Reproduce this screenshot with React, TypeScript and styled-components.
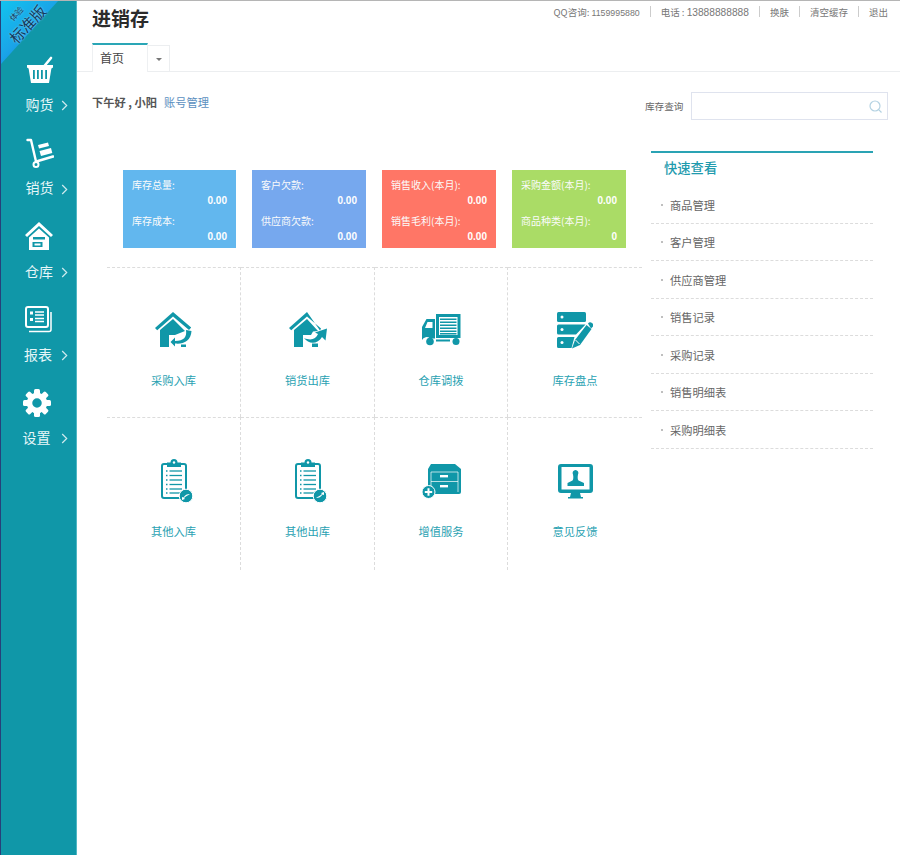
import React from "react";
import styled, { createGlobalStyle } from "styled-components";

const teal = "#1097a8";
const FONT = '"Noto Sans CJK SC", "Liberation Sans", sans-serif';

const Global = createGlobalStyle`
  html, body { margin: 0; padding: 0; background: #fff; }
  body { font-family: ${FONT}; font-size: 12px; color: #555; }
  * { box-sizing: border-box; }
`;

const Page = styled.div`
  display: flex;
  width: 900px;
  min-height: 855px;
  border-top: 1px solid #b5b5b5;
  position: relative;
`;

const Sidebar = styled.nav`
  width: 77px;
  flex: none;
  background: ${teal};
  border-left: 1px solid #27407a;
  border-right: 1px solid #4fb7c4;
  padding-top: 52px;
  position: relative;
`;

const Ribbon = styled.div`
  position: absolute;
  left: 0;
  top: 0;
  width: 57px;
  height: 63px;
  background: linear-gradient(135deg, #12c3ee 0%, #1aa6e8 45%, #1687e6 75%);
  clip-path: polygon(0 0, 100% 0, 0 100%);
`;

const RibbonText = styled.div`
  position: absolute;
  left: -1px;
  top: 6px;
  width: 46px;
  transform: rotate(-47deg);
  text-align: center;
  color: #123a5c;
  line-height: 1;
  text-shadow: 0 0 2px rgba(255, 255, 255, 0.55);
`;

const RibbonSmall = styled.div`
  font-size: 8px;
  margin-bottom: 3px;
`;

const RibbonBig = styled.div`
  font-size: 15px;
  white-space: nowrap;
`;

const NavItem = styled.a<{ $left: number; $right: number }>`
  display: block;
  height: 83.3px;
  color: #fff;
  position: relative;
  text-align: center;
  padding: 0 ${(p) => p.$right}px 0 ${(p) => p.$left}px;
`;

const NavIcon = styled.div`
  height: 34px;
  display: flex;
  align-items: center;
  justify-content: center;
  svg { display: block; }
`;

const NavLabel = styled.div`
  height: 20px;
  line-height: 20px;
  margin-top: 7px;
  font-size: 14px;
  color: #e6f6f8;
`;

const NavArrow = styled.span`
  position: absolute;
  left: 60px;
  bottom: 25px;
  svg { display: block; }
`;

const Main = styled.main`
  flex: 1;
  min-width: 0;
`;

const Header = styled.header`
  height: 71px;
  border-bottom: 1px solid #eceef0;
  padding: 0 12px 0 15px;
  display: flex;
  flex-direction: column;
`;

const TopRow = styled.div`
  display: flex;
  justify-content: space-between;
  height: 42px;
`;

const Title = styled.h1`
  margin: 0;
  font-size: 19px;
  line-height: 34px;
  font-weight: 700;
  color: #2b2b2b;
`;

const TopLinks = styled.div`
  display: flex;
  align-items: center;
  height: 22px;
  font-size: 9.5px;
  color: #777;
  white-space: nowrap;
`;

const TopLink = styled.span`
  & + &::before {
    content: "";
    display: inline-block;
    width: 1px;
    height: 11px;
    background: #ccc;
    margin: 0 10px;
    vertical-align: -1px;
  }
`;

const Digits = styled.span<{ $size: number }>`
  font-family: "Liberation Sans", sans-serif;
  font-size: ${(p) => p.$size}px;
`;

const Tabs = styled.div`
  display: flex;
  align-items: flex-end;
  height: 28px;
`;

const ActiveTab = styled.div`
  width: 56px;
  height: 29px;
  margin-bottom: -1px;
  background: #fff;
  border-top: 2px solid #2aa6b6;
  border-left: 1px solid #eef0f2;
  border-right: 1px solid #eef0f2;
  padding-left: 7px;
  line-height: 26px;
  font-size: 12px;
  color: #444;
`;

const TabMenu = styled.div`
  width: 22px;
  height: 26px;
  border: 1px solid #eceef0;
  border-bottom: 0;
  border-left: 0;
  display: flex;
  align-items: center;
  justify-content: center;
  &::after {
    content: "";
    margin-top: 2px;
    border-left: 3px solid transparent;
    border-right: 3px solid transparent;
    border-top: 3px solid #777;
  }
`;

const Body = styled.div`
  display: flex;
`;

const LeftCol = styled.section`
  width: 565px;
  flex: none;
  padding-top: 20px;
`;

const Greeting = styled.div`
  height: 20px;
  line-height: 20px;
  padding-left: 15px;
  font-size: 11.25px;
  font-weight: 700;
  color: #555;
  display: flex;
  gap: 7px;
`;

const AccountLink = styled.a`
  font-weight: 400;
  color: #5b8fc0;
`;

const Stats = styled.div`
  margin: 58px 0 19px 46px;
  display: grid;
  grid-template-columns: 113px 114px 114px 114px;
  column-gap: 16px;
`;

const StatCard = styled.div<{ $bg: string }>`
  height: 78px;
  background: ${(p) => p.$bg};
  padding: 7px 9px 0;
  color: #fff;
  font-size: 10px;
`;

const StatLabel = styled.div`
  height: 16px;
  line-height: 16px;
  color: #fbfbfb;
  white-space: nowrap;
`;

const StatValue = styled.div`
  height: 20px;
  line-height: 16px;
  text-align: right;
  font-family: "Liberation Sans", sans-serif;
  font-weight: 700;
  font-size: 10px;
`;

const Tiles = styled.div`
  margin-left: 30px;
  display: grid;
  grid-template-columns: 134px 134px 133px 134px;
`;

const Tile = styled.a<{ $last: boolean; $height: number }>`
  height: ${(p) => p.$height}px;
  border-top: 1px dashed #dcdcdc;
  border-right: ${(p) => (p.$last ? "0" : "1px dashed #dcdcdc")};
  display: flex;
  flex-direction: column;
  align-items: center;
  color: ${teal};
`;

const TileIcon = styled.div<{ $top: number }>`
  height: 50px;
  margin-top: ${(p) => p.$top}px;
  display: flex;
  align-items: center;
  justify-content: center;
  svg { display: block; }
`;

const TileLabel = styled.div`
  margin-top: 16px;
  line-height: 18px;
  font-size: 11.25px;
  color: #2aa2b2;
`;

const RightCol = styled.aside`
  flex: 1;
  padding: 20px 12px 0 3px;
`;

const SearchRow = styled.div`
  display: flex;
  align-items: center;
  justify-content: space-between;
  height: 28px;
  font-size: 9.6px;
  color: #666;
`;

const SearchBox = styled.div`
  width: 197px;
  height: 28px;
  border: 1px solid #dfe3ee;
  display: flex;
  align-items: center;
  justify-content: flex-end;
  padding-right: 4px;
`;

const Quick = styled.div`
  margin: 31px 0 0 6px;
  width: 222px;
  border-top: 2px solid #2aa3b4;
`;

const QuickTitle = styled.h2`
  margin: 0;
  height: 33px;
  line-height: 30px;
  padding-left: 13px;
  font-size: 13.3px;
  font-weight: 500;
  color: #1f9bae;
`;

const QuickItem = styled.a`
  display: flex;
  align-items: center;
  height: 37.5px;
  padding: 1px 0 0 10px;
  border-bottom: 1px dashed #dcdcdc;
  font-size: 11.25px;
  color: #666;
  &::before {
    content: "";
    width: 2px;
    height: 2px;
    margin-right: 7px;
    background: #aaa;
    border-radius: 50%;
  }
`;

const Basket = () => (
  <svg width="28" height="28" viewBox="0 0 28 28" fill="#fff">
    <path d="M17.5 11 L25 2" stroke="#fff" strokeWidth="2.6" strokeLinecap="round" />
    <path fillRule="evenodd" d="M1 9 h26 v2.4 l-1.6 1 L23 27 H5 L2.6 12.400 L1 11.400z M7 14 v9 h1.800 v-9z M11 14 v9 h1.800 v-9z M15 14 v9 h1.800 v-9z M19.200 14 v9 H21 v-9z" />
  </svg>
);

const Truck = () => (
  <svg width="28" height="30" viewBox="0 0 28 30" fill="none">
    <path d="M1.500 2 H5 L10 23.500" stroke="#fff" strokeWidth="2.400" strokeLinecap="round" strokeLinejoin="round" />
    <path d="M12 23 L27 18.500" stroke="#fff" strokeWidth="2.600" strokeLinecap="round" />
    <circle cx="10" cy="26.500" r="2.500" stroke="#fff" strokeWidth="2" />
    <path d="M12 7 L22 4.500 L23 8 L13 10.500z M13.500 13 L25 10 L26.300 15 L15 18z" fill="#fff" />
  </svg>
);

const HouseNav = () => (
  <svg width="28" height="29" viewBox="0 0 28 29" fill="#fff">
    <path d="M14 0 L0 13 l2 2 L14 4 l12 11 l2 -2z" />
    <path fillRule="evenodd" d="M14 6.500 L4 15.500 V28 H24 V15.500z M8 15 H20 V17.500 H8z M7.500 20 H17.500 V25 H7.500z" />
    <path d="M9.500 21.500 h6 v2 h-6z" />
  </svg>
);

const Report = () => (
  <svg width="27" height="27" viewBox="0 0 27 27" fill="none">
    <rect x="1" y="1" width="22" height="20" rx="2" stroke="#fff" strokeWidth="2" />
    <path d="M26 6 V23.500 A2 2 0 0 1 24 25.500 H4" stroke="#fff" strokeWidth="1.500" />
    <path d="M5 5.500 h3 v3 h-3z M5 12 h3 v3 h-3z" fill="#fff" />
    <path d="M10 6 h9 M10 9 h9 M10 12.500 h9 M10 15.500 h9" stroke="#fff" strokeWidth="1.300" />
  </svg>
);

const Gear = () => {
  const teeth = Array.from({ length: 8 }, (_, i) => i * 45);
  return (
    <svg width="28" height="30" viewBox="0 0 28 28" fill="#fff">
      {teeth.map((a) => (
        <rect key={a} x="11" y="0" width="6" height="8" rx="1.500" transform={`rotate(${a} 14 14)`} />
      ))}
      <circle cx="14" cy="14" r="7.500" fill="none" stroke="#fff" strokeWidth="5.500" />
    </svg>
  );
};

const Chevron = () => (
  <svg width="7" height="11" viewBox="0 0 7 11" fill="none">
    <path d="M1.200 1 L5.700 5.500 L1.200 10" stroke="#cfeaee" strokeWidth="1.200" />
  </svg>
);

const HouseIn = () => (
  <svg width="38" height="36" viewBox="0 0 38 36" fill={teal}>
    <path d="M18 0 L0 16 l2.200 2.200 L18 4.500 l16 13.500 l2.200 -2.400z" />
    <path fillRule="evenodd" d="M18 7 L5 18 V35 H14 V23 H20 L30 19z" />
    <path d="M31 18 C32 25 29 29 20 29 V25.500 L15.500 30 L20 34.500 V31.500 C28 32.500 36 29 36.500 19z" />
    <path d="M26 32.500 H31 V35 H26z" />
  </svg>
);

const HouseOut = () => (
  <svg width="38" height="36" viewBox="0 0 38 36" fill={teal}>
    <path d="M18 0 L0 16 l2.200 2.200 L18 4.500 l14 12 l-1 2z" />
    <path fillRule="evenodd" d="M18 7 L5 18 V35 H14 V23 H22 L24 19.500 L29 19z" />
    <path d="M15 26 C22 29 27 27 29 22 L26 20.500 L38 16.500 L36.500 28.500 L33 25 C29 32 20 33 15 26z" />
    <path d="M23 31.500 H29 V35 H23z" />
  </svg>
);

const TruckTile = () => (
  <svg width="39" height="32" viewBox="0 0 39 32" fill={teal}>
    <path fillRule="evenodd" d="M14 0 H38.500 V24 H14z M17 3 V21 H35.500 V3z" />
    <path d="M18 4.500 H34.500 V6 H18z M18 7.500 H34.500 V9 H18z M18 10.500 H34.500 V12 H18z M18 13.500 H34.500 V15 H18z M18 16.500 H34.500 V18 H18z M18 19 H34.500 V20.500 H18z" />
    <path fillRule="evenodd" d="M4.500 5 H13 V24.500 H8 A5 5 0 0 0 0 26 V13z M5.500 8 L3 14 H10.500 V8z" />
    <circle cx="8" cy="27.500" r="3.800" />
    <circle cx="34" cy="27.500" r="3.500" />
    <path d="M14 25.500 H28 V27.500 H14z" />
  </svg>
);

const ServerEdit = () => (
  <svg width="36" height="37" viewBox="0 0 36 37" fill={teal}>
    <rect x="0" y="0" width="29" height="10" rx="1.500" />
    <path d="M1.500 12.500 H28.500 L19 22.500 H1.500 A1.500 1.500 0 0 1 0 21 V14 A1.500 1.500 0 0 1 1.500 12.500z" />
    <path d="M1.500 25 H17.500 L14.500 36 H1.500 A1.500 1.500 0 0 1 0 34.500 V26.500 A1.500 1.500 0 0 1 1.500 25z" />
    <circle cx="5" cy="5" r="1.500" fill="#fff" />
    <circle cx="5" cy="17.500" r="1.500" fill="#fff" />
    <circle cx="5" cy="30.500" r="1.500" fill="#fff" />
    <path d="M29.500 13 L34.500 17 L23 33 L15 36.500 L18 28z" />
    <path d="M31 11.500 a2.600 2.600 0 0 1 4.500 3.500 L34 16.500z" />
    <path d="M18.500 28 L22.500 32" stroke="#fff" strokeWidth="1" />
  </svg>
);

const Clipboard = ({ out }: { out?: boolean }) => (
  <svg width="38" height="44" viewBox="-6 0 38 44" fill="none">
    <rect x="1" y="5" width="24" height="34" rx="2" stroke={teal} strokeWidth="2" />
    <path d="M6 3.500 H9.500 A3.500 3.500 0 0 1 16.500 3.500 H20 V8 H6z" fill={teal} />
    <circle cx="13" cy="3.500" r="1.200" fill="#fff" />
    {[12, 16.5, 21, 25.5, 30, 34].map((y) => (
      <g key={y}>
        <path d={`M5 ${y} h1.500`} stroke={teal} strokeWidth="1.300" />
        <path d={`M8.500 ${y} h12.500`} stroke={teal} strokeWidth="1.300" />
      </g>
    ))}
    <circle cx="25" cy="37" r="6.800" fill={teal} stroke="#fff" strokeWidth="1" />
    <path d={out ? "M21 39 C24 39 26 38 27.500 35.500 L29 36 L29 33 L26 34 L27 35 C25 37 23 37.500 21 39z" : "M29 35 C26 35 24 36 22.500 38.500 L21 38 L21 41 L24 40 L23 39 C25 37 27 36.500 29 35z"} fill="#fff" />
  </svg>
);

const Cabinet = () => (
  <svg width="39" height="35" viewBox="0 0 39 35" fill={teal}>
    <path fillRule="evenodd" d="M9 0 H33 L39 5 V28 A2 2 0 0 1 37 30 H6 V5z" />
    <path d="M9 8 H36 M9 17.500 H36 M9 8 V28 M36 8 V28" stroke="#fff" strokeWidth="0.700" fill="none" />
    <rect x="18" y="11" width="8" height="2.400" fill="#fff" />
    <rect x="18" y="21" width="8" height="2.400" fill="#fff" />
    <circle cx="6.500" cy="28" r="6.500" stroke="#fff" strokeWidth="1" />
    <path d="M2.800 27 H5.500 V24.300 H7.500 V27 H10.200 V29 H7.500 V31.700 H5.500 V29 H2.800z" fill="#fff" />
  </svg>
);

const Monitor = () => (
  <svg width="35" height="35" viewBox="0 0 35 35" fill={teal}>
    <path fillRule="evenodd" d="M3 0 H32 A3 3 0 0 1 35 3 V26 A3 3 0 0 1 32 29 H3 A3 3 0 0 1 0 26 V3 A3 3 0 0 1 3 0z M3.500 3 V25.500 H31.500 V3z" />
    <path d="M13 29 H22 L23 33 H25 V34.500 H10 V33 H12z" />
    <path d="M17.500 6 A3 3 0 0 1 20 10.500 C19.500 13 19.500 15.500 20.500 16.500 L26 19 V22 H9.500 V19 L14.500 16.500 C15.500 15.500 15.500 13 15 10.500 A3 3 0 0 1 17.500 6z" />
  </svg>
);

const Magnifier = () => (
  <svg width="15" height="15" viewBox="0 0 15 15" fill="none">
    <circle cx="7" cy="7" r="5" stroke="#b4d2e2" strokeWidth="1.200" />
    <path d="M10.700 10.700 L13.500 13.500" stroke="#b4d2e2" strokeWidth="1.200" />
  </svg>
);

const navItems = [
  { label: "购货", icon: <Basket />, left: 2, right: 0 },
  { label: "销货", icon: <Truck />, left: 2, right: 0 },
  { label: "仓库", icon: <HouseNav />, left: 1, right: 0 },
  { label: "报表", icon: <Report />, left: 1, right: 2 },
  { label: "设置", icon: <Gear />, left: 0, right: 4 },
];

const statCards = [
  { bg: "#62b7ee", rows: [["库存总量:", "0.00"], ["库存成本:", "0.00"]] },
  { bg: "#76a8ee", rows: [["客户欠款:", "0.00"], ["供应商欠款:", "0.00"]] },
  { bg: "#ff7666", rows: [["销售收入(本月):", "0.00"], ["销售毛利(本月):", "0.00"]] },
  { bg: "#aadc66", rows: [["采购金额(本月):", "0.00"], ["商品种类(本月):", "0"]] },
];

const tiles = [
  { label: "采购入库", icon: <HouseIn /> },
  { label: "销货出库", icon: <HouseOut /> },
  { label: "仓库调拨", icon: <TruckTile /> },
  { label: "库存盘点", icon: <ServerEdit /> },
  { label: "其他入库", icon: <Clipboard /> },
  { label: "其他出库", icon: <Clipboard out /> },
  { label: "增值服务", icon: <Cabinet /> },
  { label: "意见反馈", icon: <Monitor /> },
];

const quickLinks = ["商品管理", "客户管理", "供应商管理", "销售记录", "采购记录", "销售明细表", "采购明细表"];

export default function App() {
  return (
    <Page>
      <Global />
      <Sidebar>
        <Ribbon />
        <RibbonText>
          <RibbonSmall>体验</RibbonSmall>
          <RibbonBig>标准版</RibbonBig>
        </RibbonText>
        {navItems.map((n) => (
          <NavItem key={n.label} $left={n.left} $right={n.right}>
            <NavIcon>{n.icon}</NavIcon>
            <NavLabel>{n.label}</NavLabel>
            <NavArrow>
              <Chevron />
            </NavArrow>
          </NavItem>
        ))}
      </Sidebar>
      <Main>
        <Header>
          <TopRow>
            <Title>进销存</Title>
            <TopLinks>
              <TopLink>
                QQ咨询: <Digits $size={8.8}>1159995880</Digits>
              </TopLink>
              <TopLink>
                电话 : <Digits $size={10.2}>13888888888</Digits>
              </TopLink>
              <TopLink>换肤</TopLink>
              <TopLink>清空缓存</TopLink>
              <TopLink>退出</TopLink>
            </TopLinks>
          </TopRow>
          <Tabs>
            <ActiveTab>首页</ActiveTab>
            <TabMenu />
          </Tabs>
        </Header>
        <Body>
          <LeftCol>
            <Greeting>
              <span>下午好 , 小阳</span>
              <AccountLink>账号管理</AccountLink>
            </Greeting>
            <Stats>
              {statCards.map((c, i) => (
                <StatCard key={i} $bg={c.bg}>
                  {c.rows.map(([label, value]) => (
                    <React.Fragment key={label}>
                      <StatLabel>{label}</StatLabel>
                      <StatValue>{value}</StatValue>
                    </React.Fragment>
                  ))}
                </StatCard>
              ))}
            </Stats>
            <Tiles>
              {tiles.map((t, i) => (
                <Tile key={t.label} $last={i % 4 === 3} $height={i < 4 ? 150 : 153}>
                  <TileIcon $top={i < 4 ? 37 : 38}>{t.icon}</TileIcon>
                  <TileLabel>{t.label}</TileLabel>
                </Tile>
              ))}
            </Tiles>
          </LeftCol>
          <RightCol>
            <SearchRow>
              <span>库存查询</span>
              <SearchBox>
                <Magnifier />
              </SearchBox>
            </SearchRow>
            <Quick>
              <QuickTitle>快速查看</QuickTitle>
              {quickLinks.map((q) => (
                <QuickItem key={q}>{q}</QuickItem>
              ))}
            </Quick>
          </RightCol>
        </Body>
      </Main>
    </Page>
  );
}
